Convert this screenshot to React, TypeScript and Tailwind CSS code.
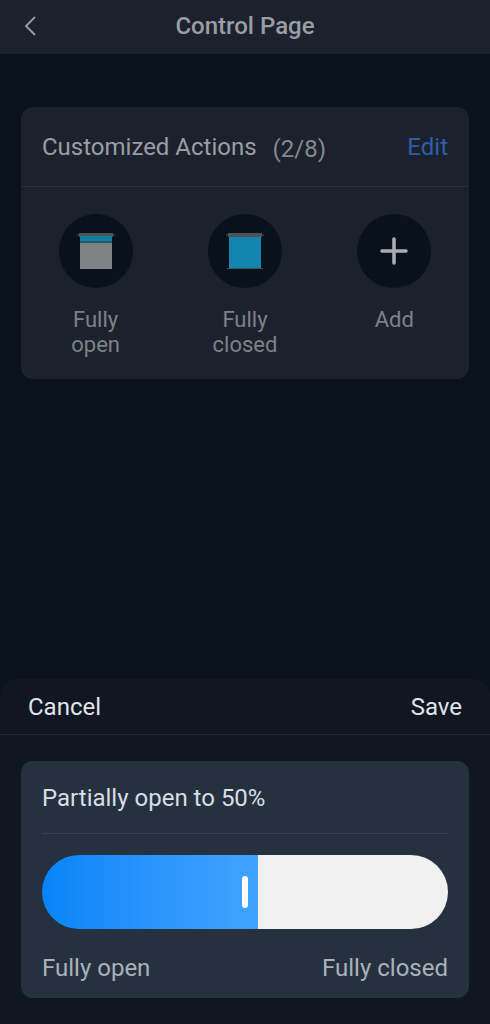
import { useState } from "react";

type ShadeIconProps = {
    closed?: boolean;
};

const BackIcon = () => (
    <svg width="12" height="20" viewBox="0 0 12 20" fill="none" stroke="currentColor" strokeWidth="1.8" aria-hidden="true">
        <path d="M11 1 2 10l9 9" />
    </svg>
);

const ShadeIcon = ({ closed }: ShadeIconProps) => (
    <svg width="40" height="38" viewBox="0 0 40 38" aria-hidden="true">
        <path d="M1 2h38v2H1z" fill="#2b3238" />
        <path d="M3 1h34v4H3z" fill="#4d5358" />
        <path d="M4 4h32v33H4z" fill={closed ? "#1286ae" : "#7f8384"} />
        {closed ? (
            <>
                <path d="M4 4h32v1H4z" fill="#4d5358" />
                <path d="M2 36.5h36" stroke="#3d5560" />
            </>
        ) : (
            <>
                <path d="M4 4h32v6H4z" fill="#127f9f" />
                <path d="M4 9h32v2H4z" fill="#24566a" />
            </>
        )}
    </svg>
);

const PlusIcon = () => (
    <svg width="30" height="30" viewBox="0 0 30 30" fill="none" stroke="#a9acb0" strokeWidth="3.6" strokeLinecap="round" aria-hidden="true">
        <path d="M15 3v24M3 15h24" />
    </svg>
);

const actions = [
    { label: "Fully open", icon: <ShadeIcon /> },
    { label: "Fully closed", icon: <ShadeIcon closed /> },
    { label: "Add", icon: <PlusIcon /> },
];

const App = () => {
    const [position, setPosition] = useState(50);

    // the fill ends 10px past the 6px handle
    const fillWidth = `calc(26px + (100% - 26px) * ${position / 100})`;

    return (
        <div className="flex min-h-screen flex-col bg-[#0a121b] font-[Roboto,sans-serif] text-2xl">
            <header className="grid h-[54px] grid-cols-[1fr_auto_1fr] items-center bg-[#1c222d] px-6 pb-[2px] text-[#9a9da3]">
                <button type="button" aria-label="Back" className="justify-self-start">
                    <BackIcon />
                </button>
                <h1 className="font-medium">Control Page</h1>
            </header>

            <main className="flex-1 px-[21px] pt-[53px] pb-6">
                <section className="rounded-xl bg-[#1c222d]">
                    <div className="flex h-20 items-center justify-between border-b border-[#29303b] px-[21px]">
                        <h2 className="flex items-center gap-4 text-[#9a9da3]">
                            Customized Actions
                            <span className="pt-1 text-[#858990]">(2/8)</span>
                        </h2>
                        <button type="button" className="text-[#2f5da8]">Edit</button>
                    </div>
                    <ul className="grid grid-cols-3 pt-[27px] pb-[22px]">
                        {actions.map((action) => (
                            <li key={action.label} className="flex justify-center">
                                <button type="button" className="flex w-20 flex-col items-center gap-[19px] text-[22px] leading-[25px] text-[#7c8189]">
                                    <span className="flex size-[74px] items-center justify-center rounded-full bg-[#09111a]">
                                        {action.icon}
                                    </span>
                                    {action.label}
                                </button>
                            </li>
                        ))}
                    </ul>
                </section>
            </main>

            <section aria-label="Edit position" className="rounded-t-2xl bg-[#111722] pb-[26px]">
                <div className="flex h-14 items-center justify-between border-b border-[#202733] px-7 text-[#e0e4e9]">
                    <button type="button">Cancel</button>
                    <button type="button">Save</button>
                </div>
                <div className="mx-[21px] mt-[26px] rounded-xl bg-[#263140] px-[21px]">
                    <label htmlFor="position" className="flex h-[73px] items-center border-b border-[#344150] pt-[2px] text-[#d8dee5]">
                        Partially open to {position}%
                    </label>
                    <input
                        id="position"
                        type="range"
                        min={0}
                        max={100}
                        value={position}
                        onChange={(e) => setPosition(Number(e.target.value))}
                        className="mt-[21px] block h-[74px] w-full cursor-pointer appearance-none rounded-full bg-[#f0f0f0] bg-linear-to-r from-[#0584f8] to-[#40a4ff] bg-no-repeat px-[10px] [&::-webkit-slider-thumb]:h-8 [&::-webkit-slider-thumb]:w-[6px] [&::-webkit-slider-thumb]:appearance-none [&::-webkit-slider-thumb]:rounded-full [&::-webkit-slider-thumb]:bg-white"
                        style={{ backgroundSize: `${fillWidth} 100%` }}
                    />
                    <div className="flex justify-between pt-[23px] pb-[14px] text-[#a9b1ba]">
                        <span>Fully open</span>
                        <span>Fully closed</span>
                    </div>
                </div>
            </section>
        </div>
    );
};

export default App;
